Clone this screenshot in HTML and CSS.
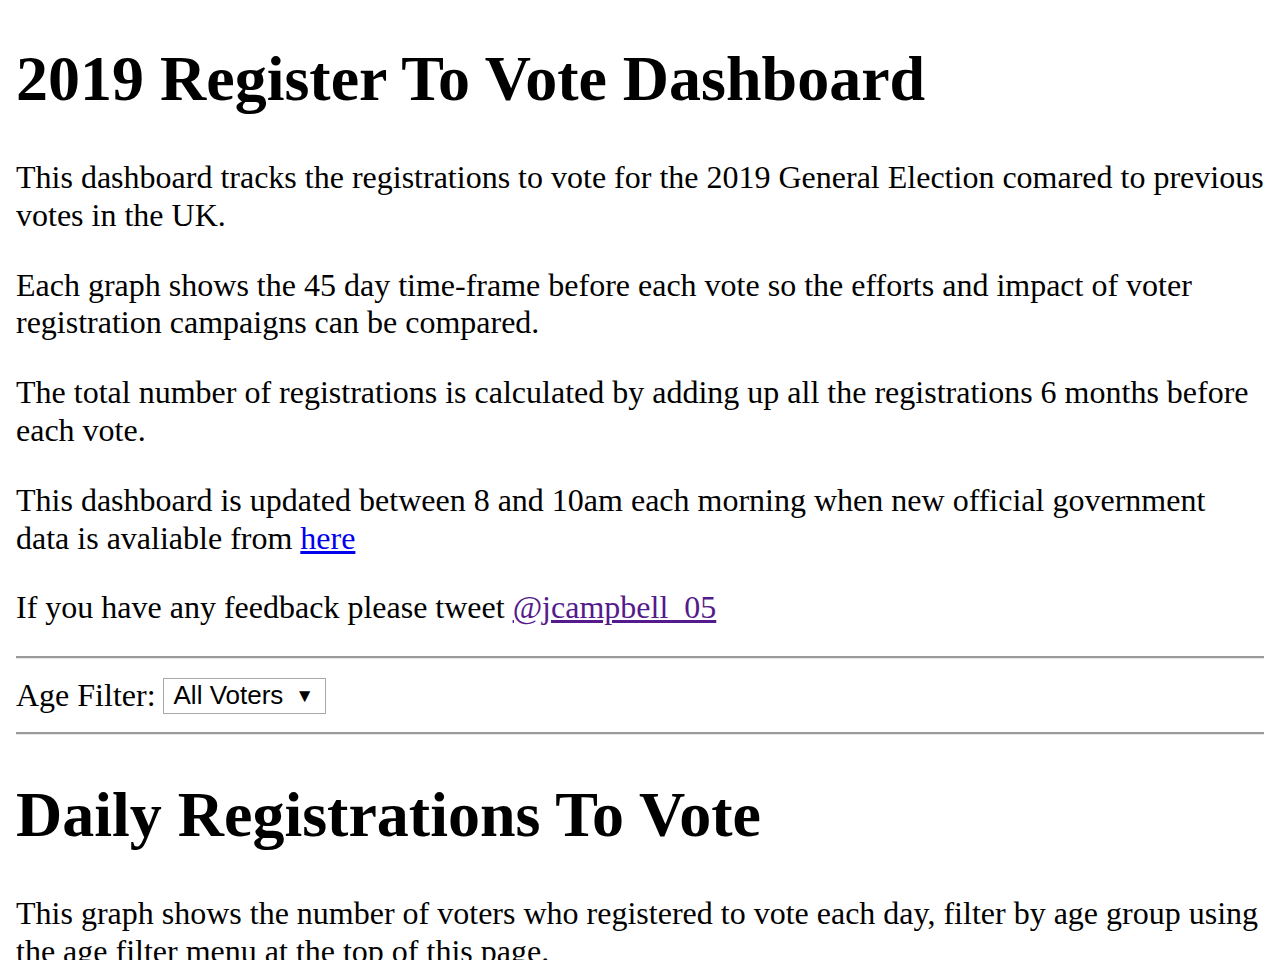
FILE: index.html
```html
<!DOCTYPE html>
<html>
<head>
<meta charset="utf-8">
<title>2019 Register To Vote Dashboard</title>
<link rel="stylesheet" href="styles.css">
</head>
<body>
<h1 class="title first">2019 Register To Vote Dashboard</h1>
<p class="text">This dashboard tracks the registrations to vote for the 2019 General Election comared to previous votes in the UK.</p>
<p class="text">Each graph shows the 45 day time-frame before each vote so the efforts and impact of voter registration campaigns can be compared.</p>
<p class="text">The total number of registrations is calculated by adding up all the registrations 6 months before each vote.</p>
<p class="text">This dashboard is updated between 8 and 10am each morning when new official government data is avaliable from <a class="link" href="#">here</a></p>
<p class="text feedback">If you have any feedback please tweet <a class="link visited" href="#">@jcampbell_05</a></p>
<hr class="rule">
<div class="filter">
  <span class="filter-label">Age Filter:</span>
  <span class="select"><span class="select-value">All Voters</span><span class="select-arrow">▼</span></span>
</div>
<hr class="rule">
<h1 class="title">Daily Registrations To Vote</h1>
<p class="text">This graph shows the number of voters who registered to vote each day, filter by age group using the age filter menu at the top of this page.</p>
</body>
</html>
```
FILE: styles.css
```css
html, body {
  background: #fff;
}
body {
  margin: 16px;
  font-family: "Liberation Serif", "Times New Roman", serif;
  font-size: 32px;
  color: #000;
}
.title {
  font-size: 64px;
  font-weight: bold;
  margin: 43px 0;
  line-height: 74px;
}
.title.first {
  margin-top: 26px;
}
.text {
  margin: 32px 0;
  line-height: 37.8px;
  font-size: 32px;
}
.text.feedback {
  margin-bottom: 29px;
}
.link {
  color: #0000ee;
}
.link.visited {
  color: #551a8b;
}
.rule {
  margin: 16px 0;
  border: 0;
  border-top: 2px solid #9a9a9a;
  border-bottom: 1px solid #e6e6e6;
  height: 0;
}
.filter {
  font-size: 32px;
  height: 41px;
  display: flex;
  align-items: center;
  gap: 7px;
}
.select {
  display: inline-flex;
  align-items: center;
  gap: 12px;
  height: 36px;
  box-sizing: border-box;
  border: 1px solid #a9a9a9;
  padding: 0 11px 0 10px;
  font-family: "Liberation Sans", Arial, sans-serif;
  font-size: 26px;
  color: #000;
}
.select-arrow {
  font-size: 19px;
}
```
